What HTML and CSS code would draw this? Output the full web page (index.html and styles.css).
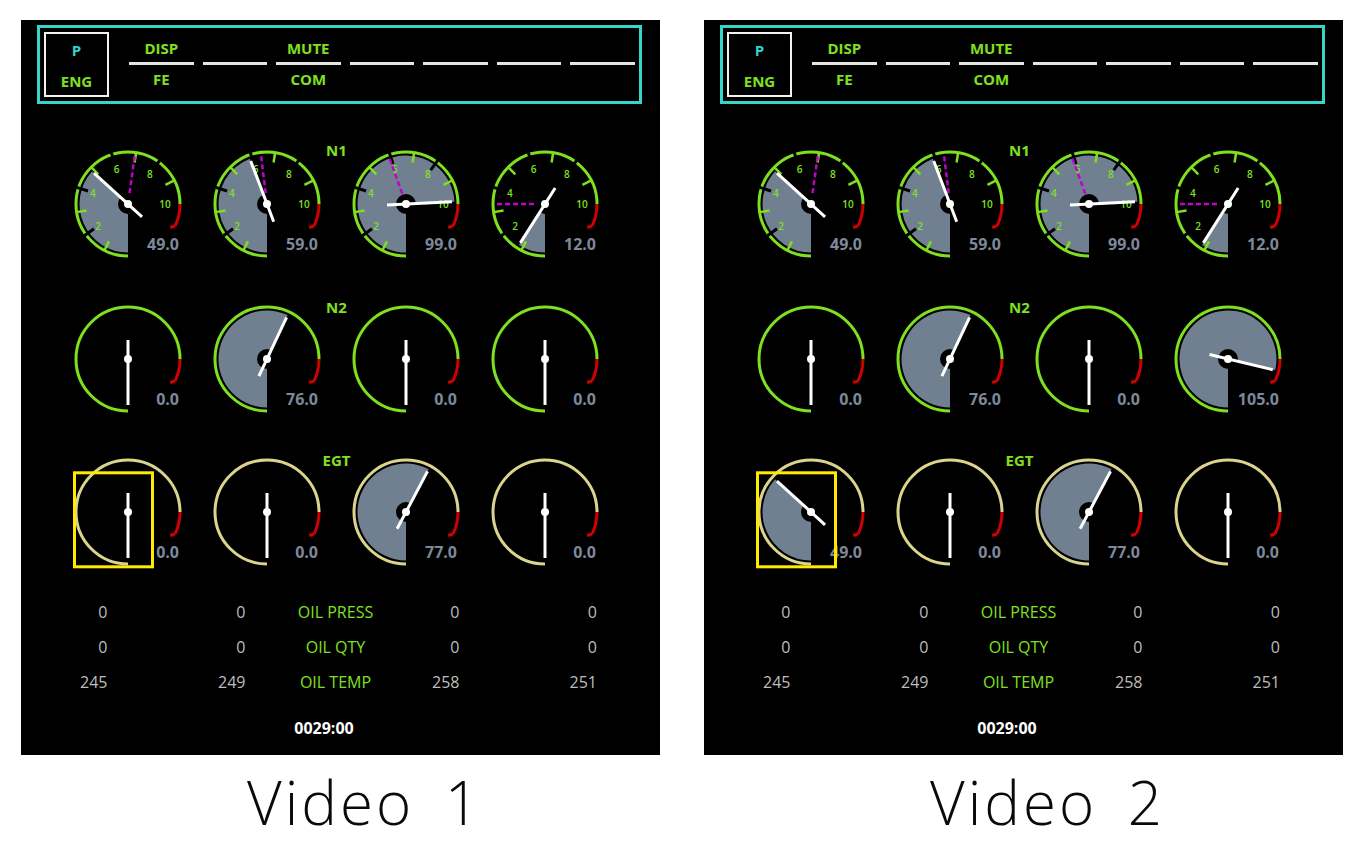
FILE: index.html
```html
<!DOCTYPE html>
<html lang="en">
<head>
<meta charset="utf-8">
<title>Engine display – Video 1 / Video 2</title>
<link rel="stylesheet" href="styles.css">
</head>
<body>
<main class="stage">
  <section class="video">
    <div class="panel">
      <header class="softkeys">
        <div class="mode"><span class="mode-top">P</span><span class="mode-bot">ENG</span></div>
        <div class="keys">
          <div class="key"><span>DISP</span><i class="k-line"></i><span>FE</span></div>
          <div class="key"><span></span><i class="k-line"></i><span></span></div>
          <div class="key"><span>MUTE</span><i class="k-line"></i><span>COM</span></div>
          <div class="key"><span></span><i class="k-line"></i><span></span></div>
          <div class="key"><span></span><i class="k-line"></i><span></span></div>
          <div class="key"><span></span><i class="k-line"></i><span></span></div>
          <div class="key"><span></span><i class="k-line"></i><span></span></div>
        </div>
      </header>
      <div class="gauge-row row-n1">
        <span class="row-title">N1</span>
        <svg class="gauge" data-type="n1" data-value="49" data-mag="188" viewBox="0 0 120 120"><text class="g-val" x="111" y="106">49.0</text></svg>
        <svg class="gauge" data-type="n1" data-value="59" data-mag="173" viewBox="0 0 120 120"><text class="g-val" x="111" y="106">59.0</text></svg>
        <svg class="gauge" data-type="n1" data-value="99" data-mag="160" viewBox="0 0 120 120"><text class="g-val" x="111" y="106">99.0</text></svg>
        <svg class="gauge" data-type="n1" data-value="12" data-mag="90" viewBox="0 0 120 120"><text class="g-val" x="111" y="106">12.0</text></svg>
      </div>
      <div class="gauge-row row-n2">
        <span class="row-title">N2</span>
        <svg class="gauge" data-type="n2" data-value="0" viewBox="0 0 120 120"><text class="g-val" x="111" y="106">0.0</text></svg>
        <svg class="gauge" data-type="n2" data-value="76" viewBox="0 0 120 120"><text class="g-val" x="111" y="106">76.0</text></svg>
        <svg class="gauge" data-type="n2" data-value="0" viewBox="0 0 120 120"><text class="g-val" x="111" y="106">0.0</text></svg>
        <svg class="gauge" data-type="n2" data-value="0" viewBox="0 0 120 120"><text class="g-val" x="111" y="106">0.0</text></svg>
      </div>
      <div class="gauge-row row-egt">
        <span class="row-title">EGT</span>
        <svg class="gauge" data-type="egt" data-value="0" data-box viewBox="0 0 120 120"><text class="g-val" x="111" y="106">0.0</text></svg>
        <svg class="gauge" data-type="egt" data-value="0" viewBox="0 0 120 120"><text class="g-val" x="111" y="106">0.0</text></svg>
        <svg class="gauge" data-type="egt" data-value="77" viewBox="0 0 120 120"><text class="g-val" x="111" y="106">77.0</text></svg>
        <svg class="gauge" data-type="egt" data-value="0" viewBox="0 0 120 120"><text class="g-val" x="111" y="106">0.0</text></svg>
      </div>
      <div class="oil">
        <span>0</span><span>0</span><span class="lbl">OIL PRESS</span><span>0</span><span>0</span>
        <span>0</span><span>0</span><span class="lbl">OIL QTY</span><span>0</span><span>0</span>
        <span>245</span><span>249</span><span class="lbl">OIL TEMP</span><span>258</span><span>251</span>
      </div>
      <div class="timer">0029:00</div>
    </div>
    <p class="caption">Video 1</p>
  </section>

  <section class="video">
    <div class="panel">
      <header class="softkeys">
        <div class="mode"><span class="mode-top">P</span><span class="mode-bot">ENG</span></div>
        <div class="keys">
          <div class="key"><span>DISP</span><i class="k-line"></i><span>FE</span></div>
          <div class="key"><span></span><i class="k-line"></i><span></span></div>
          <div class="key"><span>MUTE</span><i class="k-line"></i><span>COM</span></div>
          <div class="key"><span></span><i class="k-line"></i><span></span></div>
          <div class="key"><span></span><i class="k-line"></i><span></span></div>
          <div class="key"><span></span><i class="k-line"></i><span></span></div>
          <div class="key"><span></span><i class="k-line"></i><span></span></div>
        </div>
      </header>
      <div class="gauge-row row-n1">
        <span class="row-title">N1</span>
        <svg class="gauge" data-type="n1" data-value="49" data-mag="188" viewBox="0 0 120 120"><text class="g-val" x="111" y="106">49.0</text></svg>
        <svg class="gauge" data-type="n1" data-value="59" data-mag="173" viewBox="0 0 120 120"><text class="g-val" x="111" y="106">59.0</text></svg>
        <svg class="gauge" data-type="n1" data-value="99" data-mag="160" viewBox="0 0 120 120"><text class="g-val" x="111" y="106">99.0</text></svg>
        <svg class="gauge" data-type="n1" data-value="12" data-mag="90" viewBox="0 0 120 120"><text class="g-val" x="111" y="106">12.0</text></svg>
      </div>
      <div class="gauge-row row-n2">
        <span class="row-title">N2</span>
        <svg class="gauge" data-type="n2" data-value="0" viewBox="0 0 120 120"><text class="g-val" x="111" y="106">0.0</text></svg>
        <svg class="gauge" data-type="n2" data-value="76" viewBox="0 0 120 120"><text class="g-val" x="111" y="106">76.0</text></svg>
        <svg class="gauge" data-type="n2" data-value="0" viewBox="0 0 120 120"><text class="g-val" x="111" y="106">0.0</text></svg>
        <svg class="gauge" data-type="n2" data-value="105" viewBox="0 0 120 120"><text class="g-val" x="111" y="106">105.0</text></svg>
      </div>
      <div class="gauge-row row-egt">
        <span class="row-title">EGT</span>
        <svg class="gauge" data-type="egt" data-value="49" data-box viewBox="0 0 120 120"><text class="g-val" x="111" y="106">49.0</text></svg>
        <svg class="gauge" data-type="egt" data-value="0" viewBox="0 0 120 120"><text class="g-val" x="111" y="106">0.0</text></svg>
        <svg class="gauge" data-type="egt" data-value="77" viewBox="0 0 120 120"><text class="g-val" x="111" y="106">77.0</text></svg>
        <svg class="gauge" data-type="egt" data-value="0" viewBox="0 0 120 120"><text class="g-val" x="111" y="106">0.0</text></svg>
      </div>
      <div class="oil">
        <span>0</span><span>0</span><span class="lbl">OIL PRESS</span><span>0</span><span>0</span>
        <span>0</span><span>0</span><span class="lbl">OIL QTY</span><span>0</span><span>0</span>
        <span>245</span><span>249</span><span class="lbl">OIL TEMP</span><span>258</span><span>251</span>
      </div>
      <div class="timer">0029:00</div>
    </div>
    <p class="caption">Video 2</p>
  </section>
</main>
<script src="script.js"></script>
</body>
</html>
```

FILE: styles.css
```css
* { box-sizing: border-box; }

body {
  margin: 0;
  background: #ffffff;
  font-family: "Open Sans", "Noto Sans", sans-serif;
}

.stage {
  display: flex;
  gap: 44px;
  padding: 20px 0 0 21px;
}

.video {
  width: 639px;
}

.panel {
  width: 639px;
  height: 735px;
  background: #000;
  padding-top: 5px;
}

/* ---------- softkey header ---------- */
.softkeys {
  margin-left: 16px;
  width: 605px;
  height: 79px;
  border: 3px solid #35d5c8;
  display: flex;
  align-items: center;
  padding: 0 4px;
}

.mode {
  width: 65px;
  height: 65px;
  border: 2px solid #f2f2f2;
  display: flex;
  flex-direction: column;
  align-items: center;
  justify-content: space-between;
  padding: 6px 0 4px;
  font: 700 15px/20px "Open Sans", sans-serif;
}
.mode-top { color: #2ed3cf; }
.mode-bot { color: #80e020; }

.keys {
  display: flex;
  gap: 9px;
  margin-left: 20px;
}

.key {
  width: 64.5px;
  display: grid;
  grid-template-rows: 27px 3px 29px;
  align-items: center;
  justify-items: center;
  font: 700 15px/1 "Open Sans", sans-serif;
  color: #80e020;
}

.k-line {
  display: block;
  width: 100%;
  height: 3px;
  background: #e4e4e4;
}

/* ---------- gauges ---------- */
.gauge-row {
  display: grid;
  grid-template-columns: repeat(4, 120px);
  column-gap: 19px;
  padding-left: 47px;
}
.row-n1 { margin-top: 40px; }
.row-n2 { margin-top: 35px; }
.row-egt { margin-top: 32.5px; }

.row-title {
  grid-row: 1;
  grid-column: 2 / 4;
  justify-self: center;
  align-self: start;
  font: 700 15px/20px "Open Sans", sans-serif;
  color: #80e020;
  z-index: 1;
}
.row-n1 .row-title { margin-top: -4px; }
.row-n2 .row-title { margin-top: -2px; }
.row-egt .row-title { margin-top: -1.5px; }

.gauge {
  grid-row: 1;
  display: block;
  width: 120px;
  height: 120px;
  overflow: visible;
}
.gauge:nth-of-type(1) { grid-column: 1; }
.gauge:nth-of-type(2) { grid-column: 2; }
.gauge:nth-of-type(3) { grid-column: 3; }
.gauge:nth-of-type(4) { grid-column: 4; }

.g-fill { fill: #708090; }
.g-arc { fill: none; stroke-width: 3; }
.g-arc-green { stroke: #7fe01f; }
.g-arc-egt { stroke: #dcd48e; }
.g-red { fill: none; stroke: #d00000; stroke-width: 3; }
.g-tick { stroke: #7fe01f; stroke-width: 2.5; }
.g-cut { stroke: #000; stroke-width: 3; }
.g-lbl {
  fill: #7fe01f;
  font: 600 10px "Open Sans", sans-serif;
  text-anchor: middle;
  dominant-baseline: central;
}
.g-hub { fill: #000; }
.g-mag { stroke: #c000cc; stroke-width: 2.5; stroke-dasharray: 5 3; }
.g-needle { stroke: #ffffff; stroke-width: 3; }
.g-dot { fill: #ffffff; }
.g-val {
  fill: #7d899b;
  font: 700 16px "Open Sans", sans-serif;
  text-anchor: end;
}
.g-box { fill: none; stroke: #ffea00; stroke-width: 3; }

/* ---------- oil block ---------- */
.oil {
  margin-top: 23px;
  display: grid;
  grid-template-columns: 86.5px 138px 180px 34px 137.5px;
  grid-auto-rows: 35px;
  align-items: center;
  justify-items: end;
  font: 400 16px/1 "Open Sans", sans-serif;
  color: #bdbdbd;
}
.oil .lbl {
  justify-self: center;
  color: #80e020;
}

.timer {
  margin-top: 17px;
  padding-right: 33px;
  text-align: center;
  font: 700 16px/22px "Open Sans", sans-serif;
  color: #ffffff;
}

/* ---------- captions ---------- */
.caption {
  margin: 12px 0 0;
  padding-left: 48px;
  text-align: center;
  font: 300 60px/70px "Open Sans", sans-serif;
  letter-spacing: 3px;
  word-spacing: 12px;
  color: #0a0a0a;
}
```

FILE: script.js
```js
(function () {
  var C = 60, R = 52, K = 2.7;
  function f(n) { return n.toFixed(2); }
  function pt(s, r) {
    var t = (180 + s) * Math.PI / 180;
    return [C + r * Math.sin(t), C - r * Math.cos(t)];
  }
  function arc(s0, s1, r) {
    var a = pt(s0, r), b = pt(s1, r);
    return 'M' + f(a[0]) + ' ' + f(a[1]) + 'A' + r + ' ' + r + ' 0 ' + (s1 - s0 > 180 ? 1 : 0) + ' 1 ' + f(b[0]) + ' ' + f(b[1]);
  }
  function seg(cls, a, b) {
    return '<line class="' + cls + '" x1="' + f(a[0]) + '" y1="' + f(a[1]) + '" x2="' + f(b[0]) + '" y2="' + f(b[1]) + '"/>';
  }
  function radial(cls, s, r0, r1) { return seg(cls, pt(s, r0), pt(s, r1)); }

  document.querySelectorAll('svg.gauge').forEach(function (el) {
    var type = el.dataset.type;
    var v = parseFloat(el.dataset.value);
    var s = v * K;
    var mag = el.dataset.mag;
    var g = '';
    if (s > 0) {
      var b0 = pt(0, 48.5), e = pt(s, 48.5);
      g += '<path class="g-fill" d="M' + C + ' ' + C + 'L' + f(b0[0]) + ' ' + f(b0[1]) +
        'A48.5 48.5 0 ' + (s > 180 ? 1 : 0) + ' 1 ' + f(e[0]) + ' ' + f(e[1]) + 'Z"/>';
    }
    g += '<path class="g-arc ' + (type === 'egt' ? 'g-arc-egt' : 'g-arc-green') + '" d="' + arc(0, 270, R) + '"/>';
    g += '<path class="g-red" d="' + arc(270, 295, R) + '"/>';
    var h = pt(295, R);
    g += '<path class="g-red" d="M' + f(h[0]) + ' ' + f(h[1]) + 'l-5 1.5"/>';
    if (type === 'n1') {
      var k;
      for (k = 1; k < 10; k += 2) g += radial('g-tick', k * 27, 42, 52);
      for (k = 2; k < 10; k += 2) g += radial('g-cut', k * 27, 42, 54);
      for (k = 2; k <= 10; k += 2) {
        var p = pt(k * 27, 37);
        g += '<text class="g-lbl" x="' + f(p[0]) + '" y="' + f(p[1]) + '">' + k + '</text>';
      }
    }
    if (s > 0) g += '<circle class="g-hub" cx="' + C + '" cy="' + C + '" r="10"/>';
    if (mag) g += radial('g-mag', parseFloat(mag), 11, 51);
    g += seg('g-needle', pt(s + 180, 19), pt(s, 46));
    g += '<circle class="g-dot" cx="' + C + '" cy="' + C + '" r="4"/>';
    el.insertAdjacentHTML('afterbegin', g);
    if (el.hasAttribute('data-box')) {
      el.insertAdjacentHTML('beforeend', '<rect class="g-box" x="6.5" y="20.8" width="78" height="94"/>');
    }
  });
})();
```
